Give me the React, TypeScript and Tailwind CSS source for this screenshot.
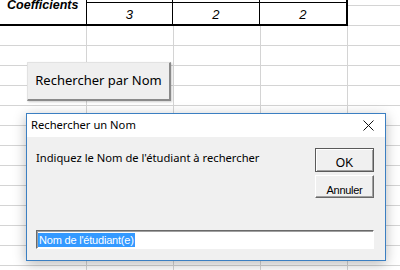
const sheetFont = "font-['Liberation_Sans',Arial,sans-serif]";
const uiFont = "font-['Noto_Sans','Open_Sans',sans-serif]";

const values = [3, 2, 2];

function GridRow() {
  return (
    <div className="flex h-[20px] shrink-0">
      <div className="w-[87px] border-r border-b border-[#d4d4d4]" />
      <div className="w-[87px] border-r border-b border-[#d4d4d4]" />
      <div className="w-[87px] border-r border-b border-[#d4d4d4]" />
      <div className="w-[87px] border-r border-b border-[#d4d4d4]" />
      <div className="flex-1 border-b border-[#d4d4d4]" />
    </div>
  );
}

function Sheet() {
  return (
    <div className="flex h-full flex-col">
      <div className="flex h-[26px] shrink-0">
        <div className="flex h-full w-[348px] border-b-2 border-r-2 border-black">
          <div className="flex w-[87px] justify-center border-r border-black">
            <span className={`${sheetFont} -mt-[1px] text-[12.5px] leading-none font-bold italic text-black`}>
              Coefficients
            </span>
          </div>
          {values.map((v, i) => (
            <div
              key={i}
              className={`flex w-[87px] flex-col ${i < 2 ? "border-r border-black" : "w-[85px]"}`}
            >
              <div className="h-[6px] border-b border-black" />
              <div className={`${sheetFont} flex flex-1 items-center justify-center pt-[2px] text-[13px] italic text-black`}>
                {v}
              </div>
            </div>
          ))}
        </div>
        <div className="flex flex-1 flex-col">
          <div className="h-[6px] border-b border-[#d4d4d4]" />
          <div className="flex-1 border-b border-[#d4d4d4]" />
        </div>
      </div>
      {Array.from({ length: 13 }).map((_, i) => (
        <GridRow key={i} />
      ))}
    </div>
  );
}

function InputDialog() {
  return (
    <div className="absolute left-[26px] top-[113px] flex h-[148px] w-[360px] flex-col border border-[#3b7fc2] bg-[#f0f0f0] shadow-[0_3px_12px_rgba(0,0,0,0.28)]">
      <div className="flex h-[23px] shrink-0 items-center justify-between bg-white pl-[4px] pr-[11px]">
        <span className={`${uiFont} text-[11.2px] text-black`}>Rechercher un Nom</span>
        <svg width="11" height="11" viewBox="0 0 11 11">
          <path d="M0.5 0.5 L10.5 10.5 M10.5 0.5 L0.5 10.5" stroke="#111" strokeWidth="1" fill="none" />
        </svg>
      </div>
      <div className="flex flex-1 flex-col pl-[9px] pr-[11px] pt-[11px] pb-[11px]">
        <div className="flex justify-between">
          <span className={`${uiFont} mt-[2px] text-[11.2px] text-black`}>
            Indiquez le Nom de l'étudiant à rechercher
          </span>
          <div className="flex w-[59px] flex-col gap-[3px]">
            <button className="h-[24px] border border-[#5a5a5a] bg-[#f0f0f0] shadow-[inset_1px_1px_0_#fff,inset_-1px_-1px_0_#a0a0a0]">
              <span className={`${sheetFont} text-[12px] text-black`}>OK</span>
            </button>
            <button className="h-[23px] border border-t-white border-l-white border-r-[#696969] border-b-[#696969] bg-[#f0f0f0] shadow-[inset_-1px_-1px_0_#a0a0a0]">
              <span className={`${sheetFont} text-[11px] tracking-[-0.3px] text-black`}>Annuler</span>
            </button>
          </div>
        </div>
        <div className="mt-auto flex h-[19px] items-center border border-t-[#696969] border-l-[#696969] border-r-white border-b-white bg-white pl-[1px] shadow-[inset_1px_1px_0_#a0a0a0]">
          <span className={`${sheetFont} bg-[#3399ff] px-[1px] text-[11px] leading-[14px] tracking-[-0.2px] text-white`}>
            Nom de l'étudiant(e)
          </span>
        </div>
      </div>
    </div>
  );
}

export default function App() {
  return (
    <div className="relative h-[270px] w-[400px] overflow-hidden bg-white">
      <Sheet />
      <button className="absolute left-[27px] top-[62px] flex h-[39px] w-[144px] items-center justify-center border border-t-[#e2e2e2] border-l-[#e2e2e2] border-r-2 border-b-2 border-r-[#8a8a8a] border-b-[#8a8a8a] bg-[#efefef] shadow-[1px_1px_2px_rgba(0,0,0,0.2)]">
        <span className={`${uiFont} text-[13px] text-black`}>Rechercher par Nom</span>
      </button>
      <InputDialog />
    </div>
  );
}
